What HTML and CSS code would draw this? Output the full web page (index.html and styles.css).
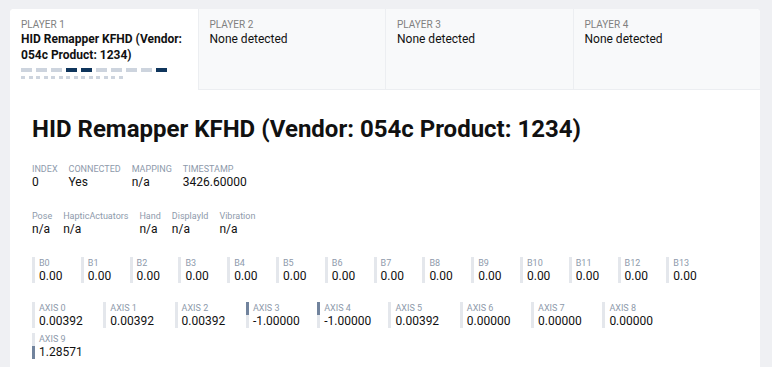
FILE: index.html
```html
<!DOCTYPE html>
<html lang="en">
<head>
    <meta charset="UTF-8">
    <meta name="viewport" content="width=device-width, initial-scale=1.0">
    <title>Gamepad Tester</title>
    <link rel="stylesheet" href="styles.css">
</head>
<body>
    <div id="main">
        <div class="tabs">
            <div class="tab active">
                <div class="tab-label">Player 1</div>
                <div class="tab-name">HID Remapper KFHD (Vendor: 054c Product: 1234)</div>
                <div class="mini-axes">
                    <span></span><span></span><span></span><span class="on"></span><span class="on"></span>
                    <span></span><span></span><span></span><span></span><span class="on"></span>
                </div>
                <div class="mini-buttons">
                    <span></span><span></span><span></span><span></span><span></span><span></span><span></span>
                    <span></span><span></span><span></span><span></span><span></span><span></span><span></span>
                </div>
            </div>
            <div class="tab">
                <div class="tab-label">Player 2</div>
                <div class="tab-name">None detected</div>
            </div>
            <div class="tab">
                <div class="tab-label">Player 3</div>
                <div class="tab-name">None detected</div>
            </div>
            <div class="tab">
                <div class="tab-label">Player 4</div>
                <div class="tab-name">None detected</div>
            </div>
        </div>

        <div class="pad">
            <h1>HID Remapper KFHD (Vendor: 054c Product: 1234)</h1>

            <div class="info upper">
                <div><div class="lbl">Index</div><div class="val">0</div></div>
                <div><div class="lbl">Connected</div><div class="val">Yes</div></div>
                <div><div class="lbl">Mapping</div><div class="val">n/a</div></div>
                <div><div class="lbl">Timestamp</div><div class="val">3426.60000</div></div>
            </div>

            <div class="info">
                <div><div class="lbl">Pose</div><div class="val">n/a</div></div>
                <div><div class="lbl">HapticActuators</div><div class="val">n/a</div></div>
                <div><div class="lbl">Hand</div><div class="val">n/a</div></div>
                <div><div class="lbl">DisplayId</div><div class="val">n/a</div></div>
                <div><div class="lbl">Vibration</div><div class="val">n/a</div></div>
            </div>

            <div class="boxes buttons" id="buttons"></div>
            <div class="boxes axes" id="axes"></div>
        </div>
    </div>
    <script>
        const buttons = Array(14).fill(0);
        const axes = [0.00392, 0.00392, 0.00392, -1, -1, 0.00392, 0, 0, 0, 1.28571];

        function box(label, text, fill) {
            return '<div class="box">' +
                '<div class="meter"><div class="fill" style="' + fill + '"></div></div>' +
                '<div><div class="lbl">' + label + '</div><div class="val">' + text + '</div></div>' +
                '</div>';
        }

        document.getElementById('buttons').innerHTML = buttons.map((v, i) => {
            const h = Math.round(v * 100);
            return box('B' + i, v.toFixed(2), 'margin-top:' + (26 - 26 * v) + 'px;height:' + h + '%');
        }).join('');

        document.getElementById('axes').innerHTML = axes.map((v, i) => {
            const c = Math.max(-1, Math.min(1, v));
            const h = Math.abs(c) * 13;
            const top = c < 0 ? 13 - h : 13;
            return box('Axis ' + i, v.toFixed(5), 'margin-top:' + top + 'px;height:' + h + 'px');
        }).join('');
    </script>
</body>
</html>
```

FILE: styles.css
```css
body {
    margin: 0;
    padding: 9px 12px 0 10px;
    background-color: #eff0f3;
    font-family: Roboto, "Liberation Sans", sans-serif;
    color: #111;
}
#main {
    background-color: white;
    border-radius: 4px;
    min-height: 400px;
    overflow: hidden;
}
.tabs {
    display: grid;
    grid-template-columns: repeat(4, 1fr);
}
.tab {
    height: 81px;
    box-sizing: border-box;
    padding: 10px 11px 0;
    background-color: #f8f9fa;
    border-left: 1px solid #eceef1;
    border-bottom: 1px solid #eceef1;
}
.tab.active {
    background-color: white;
    border: none;
}
.tab-label {
    font-size: 10px;
    line-height: 12px;
    text-transform: uppercase;
    color: #808080;
}
.tab-name {
    font-size: 12px;
    line-height: 16px;
}
.active .tab-name {
    font-weight: bold;
}
.mini-axes {
    display: flex;
    gap: 4px;
    margin-top: 5px;
}
.mini-axes span {
    width: 11px;
    height: 4px;
    background-color: #cdd4de;
}
.mini-axes span.on {
    background-color: #0f355c;
}
.mini-buttons {
    display: flex;
    gap: 3.5px;
    margin-top: 4px;
}
.mini-buttons span {
    width: 4px;
    height: 3px;
    background-color: #cdd4de;
}
.pad {
    padding: 25px 22px 20px;
}
h1 {
    font-size: 24px;
    line-height: 28px;
    margin: 0 0 20px;
}
.info {
    display: flex;
    gap: 11px;
    margin-bottom: 21px;
}
.lbl {
    font-size: 9px;
    line-height: 12px;
    color: #8e9aab;
}
.upper .lbl,
.box .lbl {
    text-transform: uppercase;
}
.val {
    font-size: 12px;
    line-height: 14px;
}
.boxes {
    display: flex;
    flex-wrap: wrap;
    gap: 5px 4px;
    margin-bottom: 19px;
}
.box {
    display: flex;
    gap: 4px;
}
.buttons .box {
    width: 44.8px;
}
.axes .box {
    width: 67.3px;
}
.meter {
    width: 3px;
    height: 26px;
    background-color: #e4e7ec;
}
.fill {
    background-color: #71839d;
}
```
